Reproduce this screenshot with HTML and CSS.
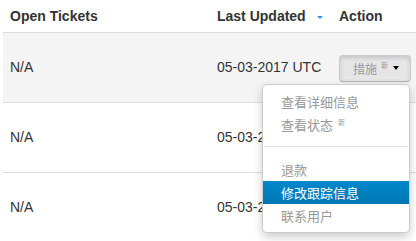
FILE: index.html
```html
<!DOCTYPE html>
<html lang="zh-CN">
<head>
    <meta charset="UTF-8">
    <meta name="viewport" content="width=device-width, initial-scale=1.0">
    <title>Tickets</title>
    <link rel="stylesheet" href="styles.css">
</head>
<body>
    <div class="page">
        <table class="tickets">
            <thead>
                <tr>
                    <th class="col-ticket">Open Tickets</th>
                    <th class="col-updated">Last Updated <span class="sort-caret"></span></th>
                    <th class="col-action">Action</th>
                </tr>
            </thead>
            <tbody>
                <tr class="row-hover">
                    <td>N/A</td>
                    <td>05-03-2017 UTC</td>
                    <td>
                        <div class="btn-group open">
                            <button class="btn active">措施<sup class="new">新</sup><span class="caret"></span></button>
                            <ul class="dropdown-menu">
                                <li><a href="#">查看详细信息</a></li>
                                <li><a href="#">查看状态<sup class="new">新</sup></a></li>
                                <li class="divider"></li>
                                <li><a href="#">退款</a></li>
                                <li class="selected"><a href="#">修改跟踪信息</a></li>
                                <li><a href="#">联系用户</a></li>
                            </ul>
                        </div>
                    </td>
                </tr>
                <tr>
                    <td>N/A</td>
                    <td>05-03-2017 UTC</td>
                    <td></td>
                </tr>
                <tr>
                    <td>N/A</td>
                    <td>05-03-2017 UTC</td>
                    <td></td>
                </tr>
            </tbody>
        </table>
    </div>
</body>
</html>
```

FILE: styles.css
```css
/* base */
* {
    box-sizing: border-box;
    margin: 0;
    padding: 0;
}

body {
    font-family: 'Liberation Sans', Arial, 'Noto Sans CJK SC', sans-serif;
    font-size: 14px;
    color: #333;
    background-color: #fff;
    overflow: hidden;
}

.page {
    padding-left: 3px;
}

/* table */
.tickets {
    width: 413px;
    table-layout: fixed;
    border-collapse: collapse;
}
.col-ticket {
    width: 207px;
}
.col-updated {
    width: 122px;
}
.col-action {
    width: 84px;
}
.tickets th {
    height: 32px;
    padding: 0 7px;
    text-align: left;
    font-weight: bold;
    vertical-align: middle;
    border-bottom: 1px solid #ddd;
    white-space: nowrap;
}
.tickets td {
    height: 70px;
    padding: 0 7px;
    vertical-align: middle;
    border-top: 1px solid #ddd;
    white-space: nowrap;
}
.row-hover td {
    background-color: #f4f4f4;
}

.sort-caret {
    display: inline-block;
    margin-left: 7px;
    vertical-align: middle;
    border-top: 3px solid #3a8ee6;
    border-left: 3.5px solid transparent;
    border-right: 3.5px solid transparent;
}

/* button + dropdown */
.btn-group {
    position: relative;
    display: inline-block;
    margin-top: 2px;
}
.btn {
    display: inline-flex;
    align-items: center;
    height: 27px;
    padding: 0 11px 0 13px;
    font-family: 'Noto Sans CJK SC', sans-serif;
    font-size: 12px;
    color: #9a9a9a;
    background-color: #e6e6e6;
    border: 1px solid #ccc;
    border-bottom-color: #b3b3b3;
    border-radius: 4px;
    box-shadow: inset 0 2px 4px rgba(0,0,0,0.15), 0 1px 2px rgba(0,0,0,0.05);
    cursor: pointer;
}
.new {
    font-size: 7px;
    margin-left: 4px;
    position: relative;
    top: -3px;
    vertical-align: top;
    color: #999;
}
.btn .caret {
    display: inline-block;
    margin-left: 5px;
    border-top: 4px solid #000;
    border-left: 3.5px solid transparent;
    border-right: 3.5px solid transparent;
}

.dropdown-menu {
    position: absolute;
    top: 100%;
    right: 1px;
    margin-top: 2px;
    width: 148px;
    padding: 5px 0;
    list-style: none;
    background-color: #fff;
    border: 1px solid rgba(0,0,0,0.2);
    border-radius: 5px;
    box-shadow: 0 4px 10px rgba(0,0,0,0.2);
    z-index: 10;
}
.dropdown-menu li a {
    display: block;
    padding: 0 18px;
    line-height: 23px;
    font-family: 'Noto Sans CJK SC', sans-serif;
    font-size: 13px;
    color: #999;
    text-decoration: none;
}
.dropdown-menu .new {
    margin-left: 5px;
    top: -2px;
}
.dropdown-menu .divider {
    height: 2px;
    margin: 10px 1px;
    background-color: #e2e2e2;
    border-bottom: 1px solid #fff;
}
.dropdown-menu .selected a {
    color: #fff;
    background-image: linear-gradient(to bottom, #0088cc, #0077b3);
}
```
